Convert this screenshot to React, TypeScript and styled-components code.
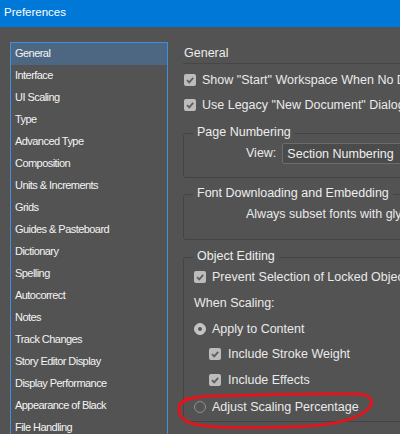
import React from "react";
import styled, { createGlobalStyle } from "styled-components";

const Global = createGlobalStyle`
  html, body { margin: 0; padding: 0; background: #535353; }
  body { font-family: "Liberation Sans", Arial, sans-serif; }
`;

const Window = styled.div`
  position: relative;
  width: 400px;
  height: 434px;
  overflow: hidden;
  background: #535353;
  display: flex;
  flex-direction: column;
`;

const TitleBar = styled.div`
  height: 27px;
  flex: none;
  background: #0078d7;
  color: #ffffff;
  font-size: 11.5px;
  line-height: 25px;
  padding-left: 4px;
`;

const Body = styled.div`
  display: flex;
  flex: 1;
  padding-top: 15px;
  min-height: 0;
`;

const List = styled.div`
  margin-left: 10px;
  width: 156px;
  flex: none;
  border: 1px solid #3f8fe0;
  border-bottom: none;
  display: flex;
  flex-direction: column;
`;

const ListItem = styled.div<{ $selected?: boolean }>`
  height: 22px;
  line-height: 20px;
  flex: none;
  padding-left: 4px;
  font-size: 11px;
  letter-spacing: -0.55px;
  color: #f4f4f4;
  background: ${(p) => (p.$selected ? "#4d6783" : "transparent")};
  white-space: nowrap;
`;

const Right = styled.div`
  margin-left: 15px;
  flex: 1;
  display: flex;
  flex-direction: column;
  padding-top: 1px;
  white-space: nowrap;
  color: #eaeaea;
  font-size: 12.5px;
`;

const Heading = styled.div`
  height: 20px;
  line-height: 20px;
  font-size: 12.5px;
  color: #ececec;
  border-bottom: 1px solid #464646;
  padding-left: 1px;
  width: 300px;
`;

const Row = styled.div<{ $h?: number; $indent?: number; $gap?: number }>`
  height: ${(p) => p.$h ?? 25}px;
  display: flex;
  align-items: center;
  gap: ${(p) => p.$gap ?? 6}px;
  padding-left: ${(p) => p.$indent ?? 1}px;
  flex: none;
`;

const Box = styled.span`
  width: 12px;
  height: 12px;
  flex: none;
  border-radius: 2px;
  background: #bcbcbc;
  display: inline-flex;
  align-items: center;
  justify-content: center;
`;

const Radio = styled.span<{ $on?: boolean }>`
  width: 12px;
  height: 12px;
  flex: none;
  box-sizing: border-box;
  border-radius: 50%;
  background: ${(p) => (p.$on ? "#c4c4c4" : "transparent")};
  border: 1px solid ${(p) => (p.$on ? "#c4c4c4" : "#8f8f8f")};
  display: inline-flex;
  align-items: center;
  justify-content: center;
  &::after {
    content: "";
    display: ${(p) => (p.$on ? "block" : "none")};
    width: 4px;
    height: 4px;
    border-radius: 50%;
    background: #555555;
  }
`;

const Group = styled.fieldset<{ $top: number; $bottom: number }>`
  margin: ${(p) => p.$top}px 0 0 0;
  padding: 0 0 ${(p) => p.$bottom}px 0;
  width: 300px;
  box-sizing: border-box;
  border: 1px solid #444444;
  border-radius: 3px;
  min-width: 0;
`;

const Legend = styled.legend`
  margin-left: 9px;
  padding: 0 4px;
  height: 16px;
  line-height: 15px;
  font-size: 12.5px;
  color: #eeeeee;
`;

const FieldLabel = styled.span`
  padding-left: 61px;
`;

const Select = styled.div`
  height: 21px;
  line-height: 20px;
  box-sizing: border-box;
  padding-left: 4px;
  border: 1px solid #6c6c6c;
  border-radius: 2px;
  background: #4b4b4b;
  color: #efefef;
  flex: 1;
`;

const Indented = styled.span`
  padding-left: 61px;
`;

const Scribble = styled.svg`
  position: absolute;
  left: 0;
  top: 0;
  pointer-events: none;
`;

const Check = () => (
  <Box>
    <svg width="10" height="10" viewBox="0 0 10 10">
      <path d="M2 5.2 L4.2 7.4 L8.2 2.8" fill="none" stroke="#5e5e5e" strokeWidth="1.8" />
    </svg>
  </Box>
);

const items = [
  "General",
  "Interface",
  "UI Scaling",
  "Type",
  "Advanced Type",
  "Composition",
  "Units & Increments",
  "Grids",
  "Guides & Pasteboard",
  "Dictionary",
  "Spelling",
  "Autocorrect",
  "Notes",
  "Track Changes",
  "Story Editor Display",
  "Display Performance",
  "Appearance of Black",
  "File Handling",
];

export default function App() {
  return (
    <>
      <Global />
      <Window>
        <TitleBar>Preferences</TitleBar>
        <Body>
          <List>
            {items.map((t, i) => (
              <ListItem key={t} $selected={i === 0}>
                {t}
              </ListItem>
            ))}
          </List>
          <Right>
            <Heading>General</Heading>
            <Row $h={3} />
            <Row>
              <Check />
              Show "Start" Workspace When No Documents Are Open
            </Row>
            <Row>
              <Check />
              Use Legacy "New Document" Dialog
            </Row>
            <Group $top={8} $bottom={12}>
              <Legend>Page Numbering</Legend>
              <Row $h={24} $gap={6}>
                <FieldLabel>View:</FieldLabel>
                <Select>Section Numbering</Select>
              </Row>
            </Group>
            <Group $top={8} $bottom={13}>
              <Legend>Font Downloading and Embedding</Legend>
              <Row $h={24}>
                <Indented>Always subset fonts with glyph counts greater than:</Indented>
              </Row>
            </Group>
            <Group $top={9} $bottom={0}>
              <Legend>Object Editing</Legend>
              <Row $h={24} $indent={10}>
                <Check />
                Prevent Selection of Locked Objects
              </Row>
              <Row $h={27} $indent={10}>
                When Scaling:
              </Row>
              <Row $h={25} $indent={10}>
                <Radio $on />
                Apply to Content
              </Row>
              <Row $h={25} $indent={25} $gap={7}>
                <Check />
                Include Stroke Weight
              </Row>
              <Row $h={27} $indent={25} $gap={7}>
                <Check />
                Include Effects
              </Row>
              <Row $h={28} $indent={10}>
                <Radio />
                Adjust Scaling Percentage
              </Row>
            </Group>
          </Right>
        </Body>
        <Scribble width="400" height="434" viewBox="0 0 400 434">
          <path
            d="M188 398 C 177 403, 176 414, 186 421 C 200 429, 240 428, 290 427 C 330 426, 356 420, 367 410 C 375 402, 373 395, 358 394 C 320 393, 260 395, 215 396 C 200 396, 186 398, 179 405"
            fill="none"
            stroke="#e3141c"
            strokeWidth="3"
            strokeLinecap="round"
          />
        </Scribble>
      </Window>
    </>
  );
}
